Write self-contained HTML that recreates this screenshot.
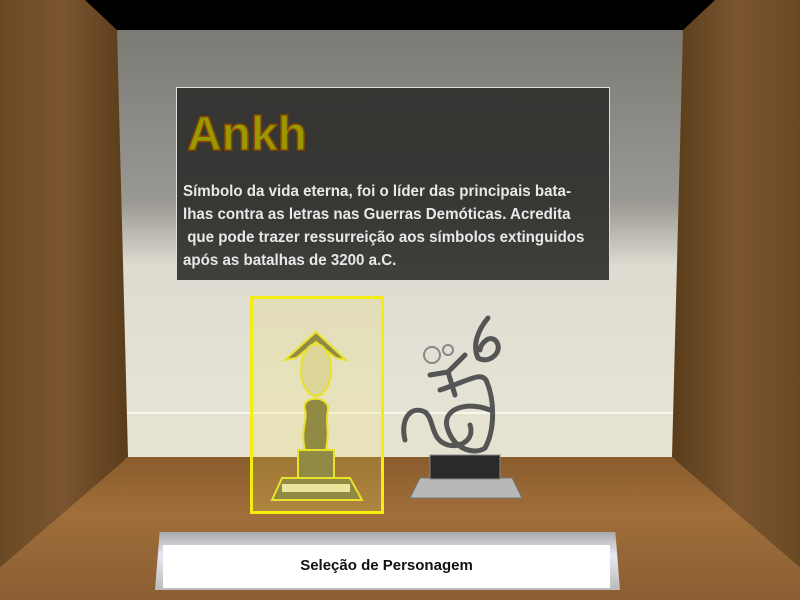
<!DOCTYPE html>
<html><head><meta charset="utf-8"><style>
*{margin:0;padding:0;box-sizing:border-box}
body{width:800px;height:600px;overflow:hidden;background:#000;position:relative;font-family:"Liberation Sans",sans-serif}
svg{position:absolute;left:0;top:0}
.box{position:absolute;left:176px;top:87px;width:434px;height:194px;background:rgba(44,44,42,0.9);border:1px solid #ddd}
.title{position:absolute;left:10px;top:19px;font-size:48px;font-weight:bold;color:#9a9a00;-webkit-text-stroke:1.5px #8a4a00}
.txt{position:absolute;left:6px;top:92px;color:#e8e8e8;font-weight:bold;font-size:15.5px;line-height:23px;white-space:pre;transform:scaleX(0.975);transform-origin:left}
.sel{position:absolute;left:250px;top:296px;width:134px;height:218px;border:3px solid #f4ee10;background:rgba(240,230,90,0.2)}
.btnbg{position:absolute;left:155px;top:532px;width:465px;height:58px;background:linear-gradient(#aaa,#e8e8f4 40%,#bbb);clip-path:polygon(1% 0,99% 0,100% 100%,0 100%)}
.btn{position:absolute;left:163px;top:545px;width:447px;height:43px;background:#fff;text-align:center;line-height:42px;font-weight:bold;font-size:15px;color:#111}
</style></head><body>
<svg width="800" height="600">
<defs>
<linearGradient id="wall" x1="0" y1="0" x2="0" y2="1"><stop offset="0" stop-color="#7c7a74"/><stop offset="0.4" stop-color="#9a9892"/><stop offset="0.55" stop-color="#dedbd0"/><stop offset="1" stop-color="#e8e5d8"/></linearGradient>
<linearGradient id="lw" x1="0" y1="0" x2="1" y2="0"><stop offset="0" stop-color="#6a4a24"/><stop offset="0.5" stop-color="#7a5530"/><stop offset="1" stop-color="#5a3c1a"/></linearGradient>
<linearGradient id="rw" x1="1" y1="0" x2="0" y2="0"><stop offset="0" stop-color="#6a4a24"/><stop offset="0.5" stop-color="#7a5530"/><stop offset="1" stop-color="#5a3c1a"/></linearGradient>
<linearGradient id="fl" x1="0" y1="0" x2="0" y2="1"><stop offset="0" stop-color="#8a5c2c"/><stop offset="0.4" stop-color="#a06e3a"/><stop offset="1" stop-color="#8a5e32"/></linearGradient>
</defs>
<rect width="800" height="600" fill="#000"/>
<rect x="117" y="30" width="566" height="430" fill="url(#wall)"/>
<rect x="117" y="413" width="566" height="44" fill="#e6e2d2"/>
<rect x="117" y="412" width="566" height="2" fill="#f8f6ee"/>
<polygon points="0,0 85,0 117,30 128,457 0,567" fill="url(#lw)"/>
<polygon points="800,0 715,0 683,30 672,457 800,567" fill="url(#rw)"/>
<polygon points="128,457 672,457 800,567 800,600 0,600 0,567" fill="url(#fl)"/>
<g fill="#7a7440" stroke="#e8e020" stroke-width="2">
<polygon points="272,500 282,478 350,478 362,500"/>
<rect x="298" y="450" width="36" height="28"/>
<path d="M305,450 C300,430 308,420 305,410 C300,395 330,395 328,410 C325,420 330,430 326,450Z"/>
<path d="M285,360 L316,332 L346,360 L336,358 L316,342 L296,358Z"/>
<ellipse cx="316" cy="370" rx="15" ry="26" fill="#d8d4a8"/>
</g>
<rect x="282" y="484" width="68" height="8" fill="#e8e6b0"/>
<polygon points="410,498 420,478 512,478 522,498" fill="#b8b8b8" stroke="#777"/>
<rect x="430" y="455" width="70" height="24" fill="#2a2a2a" stroke="#888"/>
<g fill="none" stroke="#555" stroke-width="5" stroke-linecap="round">
<path d="M488,318 C478,330 472,345 478,358 C490,365 505,350 495,340 C488,335 480,345 480,350"/>
<path d="M430,375 L448,372 L465,355 M448,372 L455,395"/>
<path d="M440,390 C470,380 480,372 486,380 C495,400 495,430 485,448 C475,455 455,450 448,430 C440,410 465,400 490,410"/>
<path d="M405,440 C400,420 410,405 425,412 C435,420 430,440 448,445 C460,448 475,440 470,425"/>
</g>
<g fill="none" stroke="#888" stroke-width="2"><circle cx="432" cy="355" r="8"/><circle cx="448" cy="350" r="5"/></g>
</svg>
<div class="box"><div class="title">Ankh</div><div class="txt">Símbolo da vida eterna, foi o líder das principais bata-
lhas contra as letras nas Guerras Demóticas. Acredita
 que pode trazer ressurreição aos símbolos extinguidos
após as batalhas de 3200 a.C.</div></div>
<div class="sel"></div>
<div class="btnbg"></div>
<div class="btn">Seleção de Personagem</div>
</body></html>
